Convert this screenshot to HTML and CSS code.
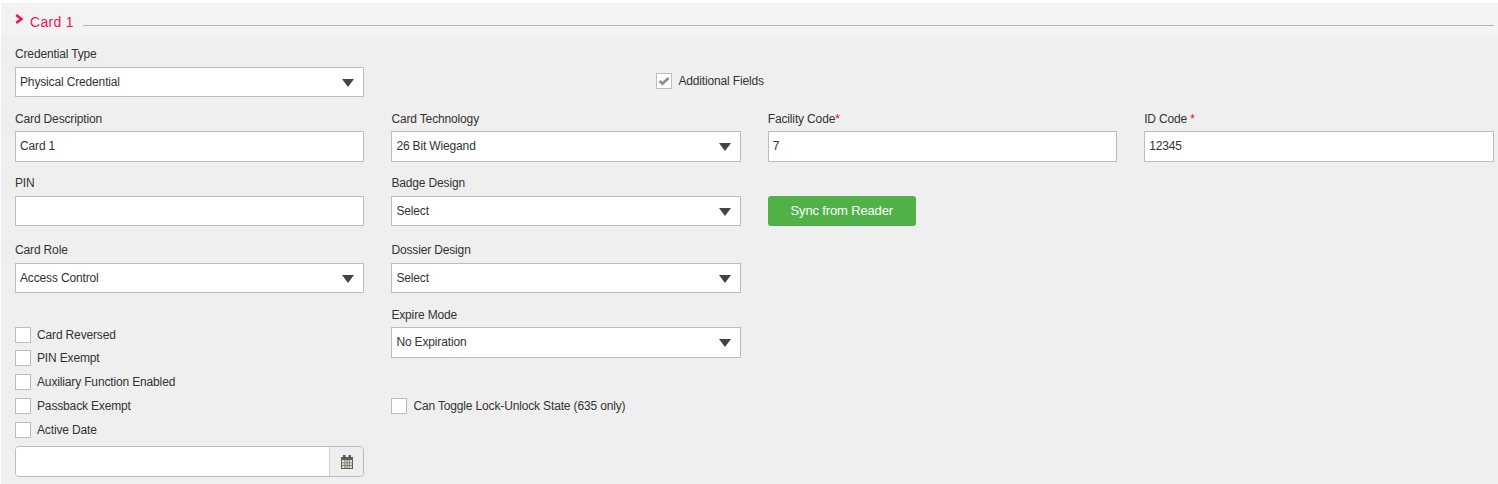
FILE: index.html
```html
<!DOCTYPE html>
<html lang="en">
<head>
<meta charset="utf-8">
<title>Card 1</title>
<link rel="stylesheet" href="styles.css">
</head>
<body>
<section class="panel">
  <header class="panel-head">
    <svg class="chevron" width="9" height="11" viewBox="0 0 9 11"><path d="M1.2 1 L6.4 5 L1.2 9" fill="none" stroke="#f0125c" stroke-width="2.6"/></svg>
    <span class="panel-title">Card 1</span>
    <span class="panel-rule"></span>
  </header>
  <div class="panel-body">
    <div class="row row-type">
      <div class="field">
        <label class="lbl">Credential Type</label>
        <div class="ctl select">Physical Credential<i class="caret"></i></div>
      </div>
      <label class="check check-additional"><span class="box"><svg width="12" height="10" viewBox="0 0 12 10"><path d="M1.5 5 L4.5 7.8 L10.5 2" fill="none" stroke="#8c8c8c" stroke-width="2.6"/></svg></span>Additional Fields</label>
    </div>
    <div class="row row-tech">
      <div class="field">
        <label class="lbl">Card Description</label>
        <div class="ctl">Card 1</div>
      </div>
      <div class="field">
        <label class="lbl">Card Technology</label>
        <div class="ctl select">26 Bit Wiegand<i class="caret"></i></div>
      </div>
      <div class="field">
        <label class="lbl">Facility Code<span class="req">*</span></label>
        <div class="ctl">7</div>
      </div>
      <div class="field">
        <label class="lbl">ID Code <span class="req">*</span></label>
        <div class="ctl">12345</div>
      </div>
    </div>
    <div class="row row-badge">
      <div class="field">
        <label class="lbl">PIN</label>
        <div class="ctl"></div>
      </div>
      <div class="field">
        <label class="lbl">Badge Design</label>
        <div class="ctl select">Select<i class="caret"></i></div>
      </div>
      <div class="field field-btn">
        <button class="btn" type="button">Sync from Reader</button>
      </div>
    </div>
    <div class="row row-role">
      <div class="field">
        <label class="lbl">Card Role</label>
        <div class="ctl select">Access Control<i class="caret"></i></div>
      </div>
      <div class="field">
        <label class="lbl">Dossier Design</label>
        <div class="ctl select">Select<i class="caret"></i></div>
      </div>
    </div>
    <div class="row row-bottom">
      <div class="checks">
        <label class="check"><span class="box"></span>Card Reversed</label>
        <label class="check"><span class="box"></span>PIN Exempt</label>
        <label class="check"><span class="box"></span>Auxiliary Function Enabled</label>
        <label class="check"><span class="box"></span>Passback Exempt</label>
        <label class="check"><span class="box"></span>Active Date</label>
        <div class="date">
          <div class="date-input"></div>
          <div class="date-addon">
            <svg width="12" height="14" viewBox="0 0 12 14"><path d="M0 2h12v12H0z" fill="#5f5f5f"/><path d="M2 0h2.4v3.5H2zM7.6 0H10v3.5H7.6z" fill="#555"/><path d="M1 5h10v8H1z" fill="#e6dcc8"/><path d="M3.4 5h1v8h-1zM5.6 5h1v8h-1zM7.8 5h1v8h-1zM1 7.4h10v.9H1zM1 10h10v.9H1z" fill="#7d7d7d"/></svg>
          </div>
        </div>
      </div>
      <div class="expire">
        <div class="field">
          <label class="lbl lbl-expire">Expire Mode</label>
          <div class="ctl select ctl-tall">No Expiration<i class="caret"></i></div>
        </div>
        <label class="check check-toggle"><span class="box"></span>Can Toggle Lock-Unlock State (635 only)</label>
      </div>
    </div>
  </div>
</section>
</body>
</html>
```
FILE: styles.css
```css
* { box-sizing: border-box; }
html, body { height: 100%; }
body {
  margin: 0;
  padding: 3px 0 0 1px;
  background: #fff;
  overflow: hidden;
  font-family: "Liberation Sans", Arial, sans-serif;
  font-size: 12px;
  line-height: 14px;
  letter-spacing: -0.15px;
  color: #333;
}
.panel { height: 481px; background: #efefef; }
.panel-head {
  height: 34px;
  background: #f3f3f3;
  display: flex;
  align-items: flex-start;
  padding-left: 14px;
  border-top-left-radius: 3px;
}
.chevron { margin-top: 11px; flex: none; }
.panel-title {
  margin: 11px 0 0 6px;
  color: #f0125c;
  font-size: 14px;
  line-height: 16px;
  letter-spacing: 0.3px;
}
.panel-rule {
  flex: none;
  margin: 22px 0 0 9px;
  width: 1411px;
  height: 1px;
  background: #b5b5b5;
}
.panel-body { padding: 10px 4px 0 14px; }
.row {
  display: grid;
  grid-template-columns: repeat(4, 349.4px);
  column-gap: 27px;
}
.row-tech { margin-top: 15px; }
.row-badge { margin-top: 14px; }
.row-role { margin-top: 17px; }
.row-bottom { margin-top: 15px; grid-template-columns: 349.4px 349.4px; }
.row-type { grid-template-columns: 349.4px auto; column-gap: 292px; }
.lbl { display: block; height: 14px; margin-bottom: 6px; }
.row-tech .lbl { margin-bottom: 5px; }
.lbl-expire { margin-bottom: 5px; }
.req { color: #f00; }
.ctl {
  height: 30px;
  background: #fff;
  border: 1px solid #bdbdbd;
  padding: 0 4px;
  line-height: 28px;
  position: relative;
}
.row-tech .ctl { height: 31px; line-height: 29px; }
.ctl-tall { height: 31px; line-height: 29px; }
.caret {
  position: absolute;
  right: 9px;
  top: 11px;
  width: 0;
  height: 0;
  border-left: 6px solid transparent;
  border-right: 6px solid transparent;
  border-top: 8px solid #444;
}
.check { display: flex; align-items: center; height: 16px; }
.box {
  flex: none;
  width: 16px;
  height: 16px;
  background: #fff;
  border: 1px solid #bdbdbd;
  margin-right: 6px;
  display: flex;
  align-items: center;
  justify-content: center;
}
.check-additional { margin-top: 26px; }
.field-btn { padding-top: 20px; }
.btn {
  width: 148px;
  height: 30px;
  border: 0;
  border-radius: 3px;
  background: #4fb146;
  color: #fff;
  font: inherit;
  font-size: 13px;
  letter-spacing: -0.15px;
  padding: 0;
}
.checks {
  display: flex;
  flex-direction: column;
  gap: 8px;
  padding-top: 19px;
}
.checks .check:first-child { margin-bottom: -1px; }
.date {
  display: flex;
  width: 349.4px;
  height: 31px;
  border: 1px solid #bdbdbd;
  border-radius: 4px;
  overflow: hidden;
}
.date-input { flex: 1; background: #fff; }
.date-addon {
  width: 34px;
  background: #eee;
  border-left: 1px solid #cfcfcf;
  display: flex;
  align-items: center;
  justify-content: center;
}
.check-toggle { margin-top: 40px; }
```
